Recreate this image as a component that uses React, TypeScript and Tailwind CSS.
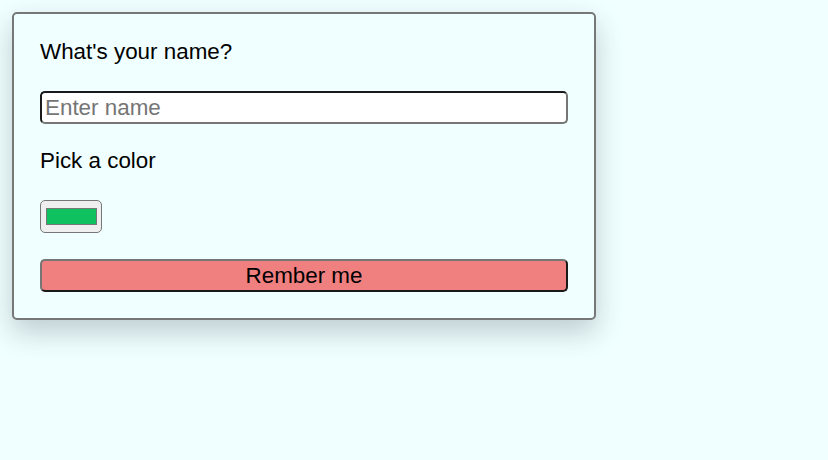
export default function App() {
  return (
    <div className="min-h-[460px] w-full bg-[#f0ffff] pt-[12px] pl-[12px]" style={{ fontFamily: '"Liberation Sans", Arial, sans-serif' }}>
      <div className="w-[584px] rounded-[5px] border-2 border-[#777777] bg-[#f0ffff] px-[26px] pt-[25px] pb-[26px] shadow-[0_12px_28px_rgba(40,60,70,0.25)]">
        <div className="h-[26px] text-[22.4px] leading-[26px] text-black">What's your name?</div>
        <input
          type="text"
          placeholder="Enter name"
          className="mt-[26px] block h-[33px] w-[528px] rounded-[5px] border-2 border-t-[#1a1a1a] border-l-[#1a1a1a] border-r-[#767676] border-b-[#767676] bg-white px-[3px] text-[22.4px] leading-[26px] text-black outline-none placeholder:text-[#757575]"
        />
        <div className="mt-[24px] h-[26px] text-[22.4px] leading-[26px] text-black">Pick a color</div>
        <div className="mt-[26px] flex h-[33px] w-[62px] items-center justify-center rounded-[5px] border border-[#767676] bg-[#efefef]">
          <div className="h-[17px] w-[51px] border border-[#777777] bg-[#10c15f]" />
        </div>
        <button className="mt-[26px] block h-[33px] w-[528px] rounded-[5px] border-2 border-t-[#767676] border-l-[#767676] border-r-[#1a1a1a] border-b-[#1a1a1a] bg-[#f08080] text-[22.4px] leading-[26px] text-black">
          Rember me
        </button>
      </div>
    </div>
  );
}
